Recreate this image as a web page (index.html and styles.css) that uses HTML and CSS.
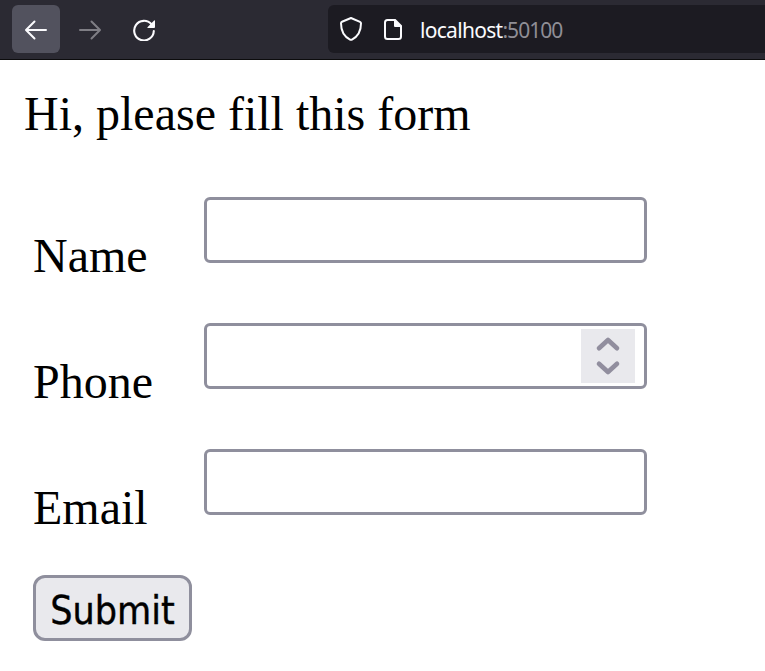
FILE: index.html
```html
<!DOCTYPE html>
<html lang="en">
<head>
<meta charset="utf-8">
<title>Form</title>
<link rel="stylesheet" href="styles.css">
</head>
<body>
<header class="toolbar">
  <div class="nav-button active">
    <svg width="24" height="24" viewBox="0 0 24 24" fill="none" stroke="#fbfbfe" stroke-width="2" stroke-linecap="round" stroke-linejoin="round"><path d="M22 13H2.500M10.500 4.500L2 13l8.500 8.500"/></svg>
  </div>
  <div class="nav-button">
    <svg width="24" height="24" viewBox="0 0 24 24" fill="none" stroke="#7f7e85" stroke-width="2" stroke-linecap="round" stroke-linejoin="round"><path d="M2 13h19.500M13.500 4.500L22 13l-8.500 8.500"/></svg>
  </div>
  <div class="nav-button">
    <svg width="24" height="24" viewBox="0 0 24 24"><path d="M19.500 7.300A9.800 9.800 0 1 0 21.800 14" fill="none" stroke="#fbfbfe" stroke-width="2.100" stroke-linecap="round"/><path d="M23 4v6q0 .9-.9.900h-6.300q-.9 0-.3-.7l6.600-6.700q.9-.5.900.5z" fill="#fbfbfe"/></svg>
  </div>
  <div class="address">
    <svg class="shield" width="24" height="26" viewBox="0 0 24 26" fill="none" stroke="#fbfbfe" stroke-width="2" stroke-linejoin="round"><path d="M12 2L21 5.800Q22 6.200 22 7.300C22 15 19 20.500 13 23.600Q12 24.100 11 23.600C5 20.500 2 15 2 7.300Q2 6.200 3 5.800Z"/></svg>
    <svg class="page-icon" width="20" height="24" viewBox="0 0 20 24"><path d="M12 2H4.500Q2 2 2 4.500v14Q2 21 4.500 21h11Q18 21 18 18.500V8" fill="none" stroke="#fbfbfe" stroke-width="2"/><path d="M11 1h1.500L19 7.500V9h-7q-1 0-1-1z" fill="#fbfbfe"/></svg>
    <div class="url">localhost<span class="port">:50100</span></div>
  </div>
</header>
<main class="page">
  <div class="title">Hi, please fill this form</div>
  <form class="form">
    <div class="row"><label class="label" for="name">Name</label><input class="field" id="name" type="text"></div>
    <div class="row"><label class="label" for="phone">Phone</label>
      <div class="field number">
        <div class="spinner"><svg width="54" height="54" viewBox="0 0 54 54" fill="none" stroke="#918e9e" stroke-width="4.600" stroke-linecap="round" stroke-linejoin="round"><path d="M18 19.300L27 11l9 8.300M18 34.700L27 43l9-8.300"/></svg></div>
      </div>
    </div>
    <div class="row"><label class="label" for="email">Email</label><input class="field" id="email" type="text"></div>
    <button class="submit" type="button">Submit</button>
  </form>
</main>
</body>
</html>
```
FILE: styles.css
```css
* { box-sizing: border-box; }
body {
  margin: 0;
  background: #fff;
  color: #000;
  font-family: "Liberation Serif", serif;
  overflow: hidden;
}
.toolbar {
  display: flex;
  height: 60px;
  padding: 5px 0 0 12px;
  gap: 6px;
  background: #2b2a33;
  border-bottom: 1px solid #0c0c0d;
}
.nav-button {
  display: flex;
  align-items: center;
  justify-content: center;
  width: 48px;
  height: 48px;
  border-radius: 6px;
}
.active { background: #52525e; }
.address {
  display: flex;
  flex: 1;
  height: 48px;
  margin-left: 154px;
  padding-left: 11px;
  background: #1c1b22;
  border-radius: 6px 0 0 6px;
}
.shield { margin-top: 11px; }
.page-icon { margin: 13px 0 0 20px; }
.url {
  margin-left: 17px;
  font: 21px/51px "Noto Sans", sans-serif;
  color: #fbfbfe;
  white-space: nowrap;
  letter-spacing: -0.7px;
}
.port { color: #8f8e96; letter-spacing: -0.95px; }
.page { padding: 26px 24px 0; }
.title { font-size: 48px; line-height: 56px; }
.form { padding: 55px 9px 0; }
.row {
  display: flex;
  align-items: flex-start;
  height: 126px;
}
.label {
  width: 171px;
  padding-top: 31px;
  font-size: 48px;
  line-height: 56px;
}
.field {
  width: 443px;
  height: 66px;
  margin: 0;
  border: 3px solid #8f8f9d;
  border-radius: 6px;
  background: #fff;
  outline: none;
}
.number {
  display: flex;
  justify-content: flex-end;
  padding: 3px 9px 3px 3px;
}
.spinner {
  width: 54px;
  height: 54px;
  background: #e9e9ed;
}
.spinner svg { display: block; }
.submit {
  display: block;
  width: 159px;
  height: 66px;
  padding: 6px 0 0;
  border: 3px solid #8f8f9d;
  border-radius: 12px;
  background: #e9e9ed;
  color: #000;
  font: 39px/54px "DejaVu Sans Condensed", "DejaVu Sans", sans-serif;
  font-stretch: condensed;
  -webkit-text-stroke: 0.4px #000;
}
```
